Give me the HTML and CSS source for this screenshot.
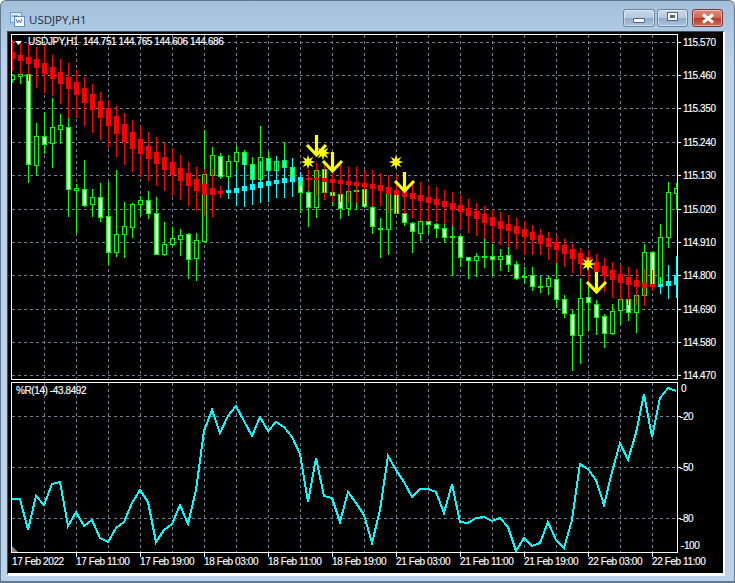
FILE: index.html
```html
<!DOCTYPE html>
<html lang="en">
  <head>
    <meta charset="UTF-8" />
    <title>USDJPY,H1</title>
    <link rel="stylesheet" href="styles.css">
  </head>
  <body>
    <div class="window">
      <div class="titlebar">
        <svg class="app-icon" width="15" height="15" viewBox="0 0 15 15">
          <rect x="0.5" y="0.5" width="11" height="10" fill="#dfeaf6" stroke="#6f9fd0" />
          <rect x="4.5" y="4.5" width="10" height="10" fill="#ffffff" stroke="#5d8fc4" />
          <path d="M2 4h6M6 7l1.500 4 1.500-3 1.500 3 1.500-4" fill="none" stroke="#4a78b0" />
        </svg>
        <span class="title">USDJPY,H1</span>
        <div class="buttons">
          <div class="btn btn-min"><span class="min-icon"></span></div>
          <div class="btn"><span class="max-icon"></span></div>
          <div class="btn btn-close">
            <svg width="18" height="11" viewBox="0 0 18 11">
              <path d="M4 1.500l10 8M14 1.500l-10 8" stroke="#ffffff" stroke-width="3" fill="none" />
            </svg>
          </div>
        </div>
      </div>
      <div class="client">
        <!-- viewBox uses window coordinates, so chart.js can work in screen pixels -->
        <svg id="chart" width="715" height="541" viewBox="8 32 715 541"></svg>
      </div>
    </div>
    <script src="chart.js"></script>
  </body>
</html>
```

FILE: styles.css
```css
body {
  margin: 0;
  background-color: #fff;
  font-family: "Liberation Sans", Arial, sans-serif;
}

.window {
  box-sizing: border-box;
  width: 735px;
  height: 583px;
  border: 1px solid #62788e;
  border-bottom-width: 2px;
  border-radius: 6px 6px 0 0;
  padding: 0 8px 5px 6px;
  background: linear-gradient(#a3bfda, #b9d3ec 60px);
  display: flex;
  flex-direction: column;
}

.titlebar {
  height: 30px;
  display: flex;
  align-items: center;
  padding-left: 3px;
  flex: none;
}

.app-icon {
  flex: none;
  margin-top: 7px;
}

.title {
  margin-left: 4px;
  margin-top: 7px;
  font-family: "Open Sans", sans-serif;
  font-size: 11.5px;
  color: #1c2c40;
}

.buttons {
  margin-left: auto;
  margin-right: 3px;
  margin-top: 4px;
  display: flex;
  gap: 2px;
}

.btn {
  box-sizing: border-box;
  width: 31px;
  height: 18px;
  border: 1px solid #6f8396;
  border-radius: 3px;
  background: linear-gradient(#c6d8ea, #b4cbe2 48%, #8fabc8 52%, #a9c4de);
  box-shadow: inset 0 0 0 1px rgba(255, 255, 255, 0.45);
  display: flex;
  align-items: center;
  justify-content: center;
}

.btn-min {
  width: 32px;
}

.btn-close {
  margin-left: 2px;
  border-color: #7a3a36;
  background: linear-gradient(#dd8a7c, #cf6a5c 48%, #b83c30 52%, #cc6a58);
}

.min-icon {
  width: 10px;
  height: 3px;
  margin-top: 5px;
  background-color: #fff;
  border: 1px solid #52667c;
  border-radius: 1px;
}

.max-icon {
  box-sizing: border-box;
  width: 11px;
  height: 9px;
  margin-bottom: 3px;
  background-color: #fff;
  border: 1px solid #52667c;
  box-shadow: inset 0 0 0 2px #fff, inset 0 0 0 4px #52667c;
}

.client {
  border-left: 1px solid #3c4c5c;
  border-top: 1px solid #3c4c5c;
  border-right: 2px solid #fff;
  border-bottom: 3px solid #fff;
  background-color: #000;
  width: 715px;
  height: 541px;
}

#chart {
  display: block;
}

/* chart parts */
.frame {
  fill: none;
  stroke: #fff;
}

.grid {
  stroke: #708090;
  stroke-dasharray: 3 3;
  shape-rendering: crispEdges;
}

.tick {
  stroke: #fff;
  shape-rendering: crispEdges;
}

.bull {
  fill: #0f0;
  shape-rendering: crispEdges;
}

.fill-white {
  fill: #fff;
  shape-rendering: crispEdges;
}

.fill-black {
  fill: #000;
  shape-rendering: crispEdges;
}

.bear {
  fill: #f00;
  shape-rendering: crispEdges;
}

.cyan {
  fill: #0ff;
  shape-rendering: crispEdges;
}

.wpr {
  fill: none;
  stroke: #0ff;
  stroke-width: 2;
  stroke-linejoin: miter;
  shape-rendering: crispEdges;
}

.arrow {
  fill: none;
  stroke: #ffff00;
  stroke-width: 3.2;
  stroke-linejoin: miter;
}

.star {
  fill: #ff0;
}

.corner-white {
  fill: #fff;
}

.corner-grey {
  fill: #708090;
}

.label {
  fill: #fff;
  stroke: #fff;
  stroke-width: 0.15px;
  font-family: "Liberation Sans", Arial, sans-serif;
  font-size: 10px;
  letter-spacing: -0.4px;
  white-space: pre;
}
```

FILE: chart.js
```js
const svg = document.getElementById('chart');

function add(tag, attrs, text) {
  const el = document.createElementNS('http://www.w3.org/2000/svg', tag);
  for (const k in attrs) el.setAttribute(k, attrs[k]);
  if (text) el.textContent = text;
  svg.appendChild(el);
  return el;
}

function rect(x, y, w, h, cls) {
  add('rect', { x: x, y: y, width: w, height: h, class: cls });
}

// candle body, cut off at the pane edges
function body(x, halfW, top, h, cls) {
  const left = Math.max(x - halfW, 12);
  const right = Math.min(x + halfW, 676);
  rect(left, top, right - left + 1, h, cls);
}

// price candles per bar: wick top, body top, body bottom, wick bottom, w = white / o = hollow
const candles = [
  [74, 75, 79, 82, 'o'], [73, 74, 76, 83, 'o'], [72, 74, 164, 182, 'w'], [123, 136, 165, 175, 'o'],
  [112, 136, 144, 153, 'w'], [98, 127, 143, 167, 'o'], [114, 125, 129, 143, 'o'], [109, 127, 189, 216, 'w'],
  [184, 188, 190, 232, 'o'], [160, 189, 205, 206, 'w'], [189, 197, 204, 216, 'o'], [183, 197, 217, 221, 'w'],
  [182, 216, 252, 264, 'w'], [170, 234, 252, 256, 'o'], [202, 226, 234, 257, 'o'], [203, 204, 227, 237, 'o'],
  [196, 200, 204, 215, 'o'], [191, 200, 213, 218, 'w'], [197, 213, 254, 254, 'w'], [222, 244, 254, 255, 'o'],
  [227, 238, 244, 245, 'o'], [229, 235, 239, 255, 'o'], [233, 234, 259, 278, 'w'], [233, 240, 258, 280, 'o'],
  [130, 174, 241, 242, 'o'], [147, 155, 175, 178, 'o'], [153, 156, 176, 178, 'w'], [155, 161, 176, 180, 'o'],
  [146, 152, 161, 169, 'o'], [150, 152, 164, 165, 'w'], [157, 164, 179, 180, 'w'], [126, 157, 179, 180, 'o'],
  [152, 158, 170, 180, 'w'], [156, 161, 170, 170, 'o'], [142, 160, 167, 168, 'w'], [158, 167, 179, 180, 'w'],
  [173, 179, 192, 212, 'w'], [185, 192, 207, 226, 'w'], [163, 170, 207, 217, 'o'], [163, 169, 192, 199, 'w'],
  [186, 192, 195, 205, 'w'], [193, 194, 208, 218, 'w'], [190, 191, 208, 215, 'o'], [184, 190, 191, 209, 'o'],
  [180, 189, 206, 207, 'w'], [203, 207, 226, 233, 'w'], [218, 228, 229, 257, 'o'], [183, 193, 229, 254, 'o'],
  [183, 193, 213, 213, 'w'], [212, 213, 222, 225, 'w'], [222, 223, 231, 252, 'w'], [219, 221, 233, 240, 'o'],
  [219, 221, 224, 233, 'w'], [223, 224, 228, 237, 'w'], [223, 228, 237, 241, 'w'], [226, 236, 237, 275, 'o'],
  [235, 236, 257, 266, 'w'], [257, 257, 260, 278, 'w'], [253, 256, 260, 276, 'o'], [238, 256, 257, 267, 'o'],
  [244, 256, 259, 275, 'w'], [249, 256, 259, 270, 'o'], [245, 255, 264, 271, 'w'], [261, 264, 278, 279, 'w'],
  [267, 276, 277, 283, 'o'], [267, 275, 286, 290, 'w'], [276, 286, 287, 292, 'o'], [276, 278, 286, 294, 'o'],
  [262, 279, 299, 307, 'w'], [295, 299, 313, 317, 'w'], [310, 314, 335, 370, 'w'], [278, 298, 335, 363, 'o'],
  [280, 297, 302, 330, 'w'], [300, 304, 317, 334, 'w'], [314, 316, 333, 347, 'w'], [304, 311, 333, 334, 'o'],
  [298, 299, 310, 324, 'o'], [295, 299, 312, 320, 'w'], [293, 295, 312, 332, 'o'], [244, 252, 295, 296, 'o'],
  [251, 252, 285, 290, 'w'], [224, 237, 285, 285, 'o'], [182, 192, 237, 247, 'o'], [183, 188, 193, 209, 'o']
];

// trend candles on top: wick top, body top, body bottom, wick bottom (red up to bar 26, then cyan, then red, then cyan)
const trend = [
  [40, 52, 58, 70], [43, 55, 60, 75], [43, 57, 63, 80], [47, 59, 67, 87], [45, 63, 73, 92], [55, 67, 78, 95],
  [59, 72, 83, 103], [63, 77, 88, 117], [70, 82, 94, 117], [77, 88, 102, 125], [84, 94, 109, 132], [92, 101, 117, 139],
  [100, 108, 125, 147], [106, 116, 133, 156], [113, 124, 141, 164], [120, 132, 148, 171], [126, 139, 153, 176],
  [132, 146, 158, 180], [137, 152, 163, 185], [143, 157, 169, 190], [148, 162, 174, 195], [155, 168, 180, 199],
  [162, 173, 185, 205], [167, 179, 190, 210], [169, 184, 194, 215], [169, 188, 194, 216], [186, 191, 193, 197],
  [181, 190, 192, 198], [170, 188, 192, 205], [153, 186, 190, 206], [165, 184, 189, 204], [161, 182, 187, 202],
  [160, 181, 185, 201], [156, 180, 183, 197], [158, 178, 182, 197], [158, 177, 181, 196], [172, 177, 180, 185],
  [170, 178, 179, 190], [163, 178, 179, 195], [165, 178, 181, 199], [165, 179, 182, 201], [165, 180, 183, 201],
  [167, 181, 184, 202], [167, 182, 185, 202], [170, 183, 186, 203], [170, 184, 188, 205], [173, 185, 190, 205],
  [175, 187, 193, 212], [175, 190, 194, 213], [177, 191, 196, 213], [182, 193, 198, 217], [182, 195, 200, 220],
  [185, 197, 202, 221], [187, 199, 204, 221], [190, 201, 206, 223], [192, 203, 209, 225], [195, 205, 211, 228],
  [199, 208, 215, 232], [203, 211, 218, 235], [206, 214, 222, 238], [209, 217, 225, 241], [212, 221, 228, 244],
  [215, 224, 230, 246], [218, 226, 233, 248], [221, 229, 236, 254], [225, 232, 239, 254], [229, 235, 243, 254],
  [232, 238, 246, 259], [236, 242, 249, 262], [239, 245, 253, 266], [244, 249, 258, 272], [248, 253, 263, 275],
  [250, 257, 265, 285], [254, 262, 271, 285], [258, 266, 275, 291], [262, 270, 279, 297], [265, 274, 282, 301],
  [267, 277, 284, 304], [269, 280, 286, 304], [269, 283, 287, 305], [270, 284, 286, 290], [277, 284, 286, 293],
  [265, 281, 285, 298], [256, 275, 284, 297]
];

// %R line, one y per bar
const wpr = [
  499, 499, 530, 496, 505, 484, 482, 526, 512, 526, 520, 538, 542, 528, 522, 503, 490, 502, 542, 530, 524,
  505, 524, 490, 431, 410, 433, 416, 406, 421, 436, 417, 431, 422, 427, 437, 454, 502, 458, 496, 498, 522,
  492, 503, 515, 543, 510, 456, 470, 482, 497, 489, 489, 492, 513, 484, 522, 523, 518, 517, 521, 518, 527,
  551, 538, 546, 543, 522, 540, 548, 520, 464, 469, 480, 505, 472, 443, 460, 433, 394, 437, 398, 388, 391
];

const barX = (i) => 12 + 8 * i;
const isCyan = (i) => (i >= 27 && i <= 36) || i >= 81;

// frames of the two panes
add('rect', { x: 11.5, y: 34.5, width: 666, height: 345, class: 'frame' });
add('rect', { x: 11.5, y: 382.5, width: 666, height: 170, class: 'frame' });

// grid
const priceRows = [
  [42, '115.570'], [75, '115.460'], [108, '115.350'], [142, '115.240'], [175, '115.130'], [209, '115.020'],
  [242, '114.910'], [275, '114.800'], [309, '114.690'], [342, '114.580'], [375, '114.470']
];
const wprRows = [[416, '-20'], [467, '-50'], [518, '-80']];

priceRows.forEach((r) => {
  add('line', { x1: 12, x2: 677, y1: r[0] + 0.5, y2: r[0] + 0.5, class: 'grid' });
  add('line', { x1: 677, x2: 681, y1: r[0] + 0.5, y2: r[0] + 0.5, class: 'tick' });
  add('text', { x: 683, y: r[0] + 4, class: 'label' }, r[1]);
});
wprRows.forEach((r) => {
  add('line', { x1: 12, x2: 677, y1: r[0] + 0.5, y2: r[0] + 0.5, class: 'grid' });
  add('line', { x1: 677, x2: 681, y1: r[0] + 0.5, y2: r[0] + 0.5, class: 'tick' });
  add('text', { x: 680, y: r[0] + 4, class: 'label' }, r[1]);
});
add('text', { x: 681, y: 392, class: 'label' }, '0');
add('text', { x: 681, y: 549, class: 'label' }, '-100');

for (let x = 44; x <= 652; x += 32) {
  add('line', { x1: x + 0.5, x2: x + 0.5, y1: 35, y2: 379, class: 'grid' });
  add('line', { x1: x + 0.5, x2: x + 0.5, y1: 383, y2: 552, class: 'grid' });
}

// time axis
const times = [
  '17 Feb 2022', '17 Feb 11:00', '17 Feb 19:00', '18 Feb 03:00', '18 Feb 11:00', '18 Feb 19:00',
  '21 Feb 03:00', '21 Feb 11:00', '21 Feb 19:00', '22 Feb 03:00', '22 Feb 11:00'
];
times.forEach((t, i) => {
  const x = 12 + 64 * i;
  if (i > 0) add('line', { x1: x + 0.5, x2: x + 0.5, y1: 552, y2: 557, class: 'tick' });
  add('text', { x: x, y: 565, class: 'label' }, t);
});

// price candles
candles.forEach((c, i) => {
  const x = barX(i);
  rect(x, c[0], 1, c[3] - c[0] + 1, 'bull');
  body(x, 2, c[1], c[2] - c[1] + 1, 'bull');
  if (c[2] - c[1] >= 2) {
    body(x, 1, c[1] + 1, c[2] - c[1] - 1, c[4] === 'w' ? 'fill-white' : 'fill-black');
  }
});

// trend candles
trend.forEach((c, i) => {
  const x = barX(i);
  const cls = isCyan(i) ? 'cyan' : 'bear';
  rect(x, c[0], 1, c[3] - c[0] + 1, cls);
  body(x, 2, c[1], c[2] - c[1] + 1, cls);
});

// signals
function starPoints(cx, cy) {
  const pts = [];
  for (let i = 0; i < 16; i++) {
    const r = i % 2 ? 3.2 : 7.5;
    const a = (Math.PI * i) / 8 - Math.PI / 2;
    pts.push((cx + r * Math.cos(a)).toFixed(1) + ',' + (cy + r * Math.sin(a)).toFixed(1));
  }
  return pts.join(' ');
}
[[308, 162], [323, 153], [396, 162], [588, 264]].forEach((s) => {
  add('polygon', { points: starPoints(s[0], s[1]), class: 'star' });
});
[[316, 135, 145], [332, 152, 161], [404, 172, 181], [596, 272, 282]].forEach((a) => {
  const x = a[0] + 0.5;
  const tip = a[2] + 10;
  add('path', {
    d: `M${x} ${a[1]}V${tip}M${x - 9.5} ${a[2]}L${x} ${tip}L${x + 9.5} ${a[2]}`,
    class: 'arrow'
  });
});

// %R line
add('polyline', { points: wpr.map((y, i) => barX(i) + ',' + y).join(' '), class: 'wpr' });

// pane captions and corner marks
add('text', { x: 28, y: 45, class: 'label' }, 'USDJPY,H1  144.751 144.765 144.606 144.686');
add('text', { x: 16, y: 394, class: 'label' }, '%R(14) -43.8492');
add('polygon', { points: '15,41 22,41 18.500,45', class: 'corner-white' });
add('polygon', { points: '12,546 12,552 18,552', class: 'corner-grey' });
```
